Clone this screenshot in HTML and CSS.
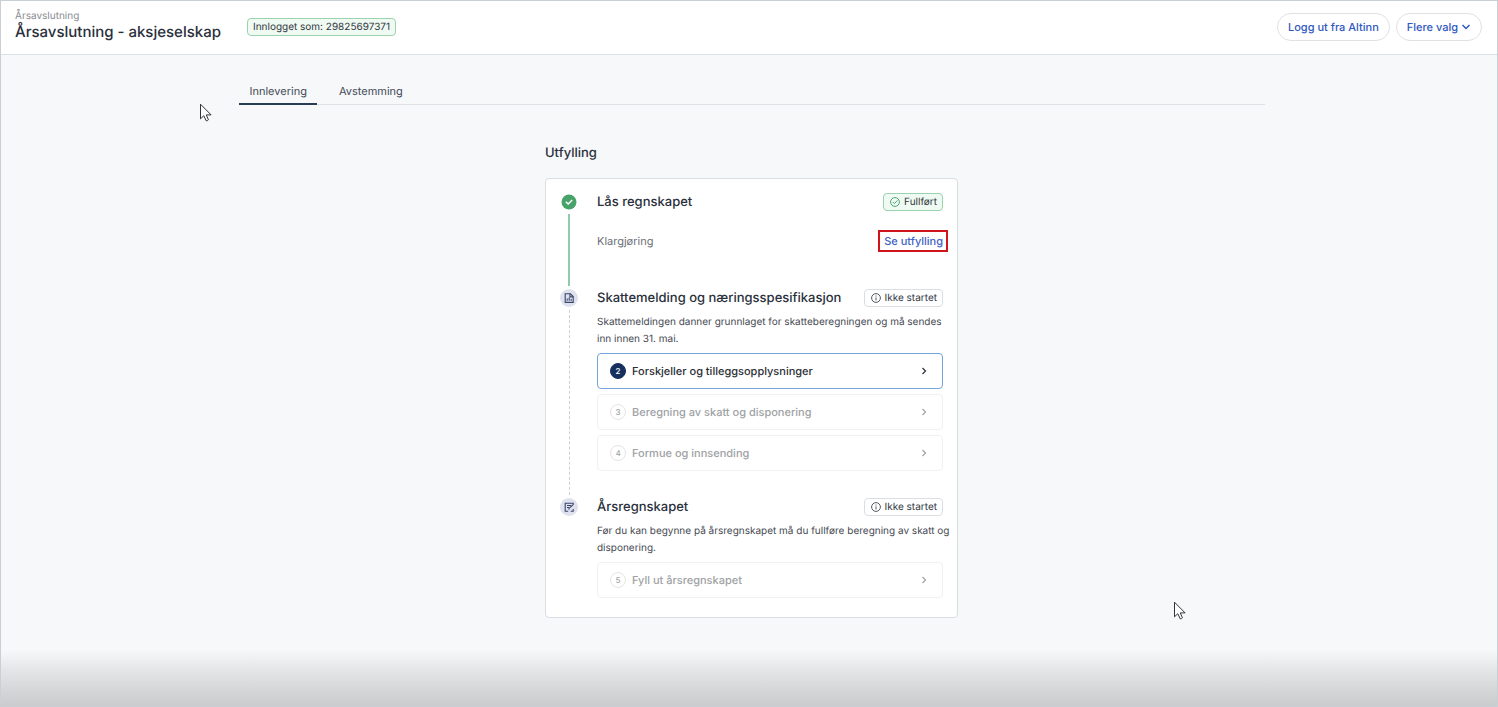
FILE: index.html
```html
<!DOCTYPE html>
<html lang="nb">
<head>
<meta charset="utf-8">
<meta name="viewport" content="width=device-width, initial-scale=1">
<title>Årsavslutning - aksjeselskap</title>
<link rel="stylesheet" href="styles.css">
</head>
<body>
<svg class="sprite" aria-hidden="true">
  <symbol id="chevron" viewBox="0 0 12 12"><path d="M4.500 3 7.500 6 4.500 9"/></symbol>
  <symbol id="info" viewBox="0 0 12 12"><circle cx="6" cy="6" r="4.4"/><path d="M6 5.4v3M6 3.5v1"/></symbol>
  <symbol id="pointer" viewBox="0 0 14 20"><path d="M1.5 1.2v14.6l3.3-3.1 2.4 5.1q1.200.3 2.200-1L7.300 11.900h4.800z"/></symbol>
</svg>
<header class="header">
  <div class="heading">
    <span class="overline">Årsavslutning</span>
    <h1 class="title">Årsavslutning - aksjeselskap</h1>
  </div>
  <span class="badge badge-success">Innlogget som: 29825697371</span>
  <div class="actions">
    <button class="pill" type="button">Logg ut fra Altinn</button>
    <button class="pill" type="button">Flere valg
      <svg class="caret" viewBox="0 0 10 8" aria-hidden="true"><path d="M1.5 2 5 5.500 8.500 2"/></svg>
    </button>
  </div>
</header>
<main class="main">
  <nav class="tabs">
    <a class="tab tab-active" href="#innlevering">Innlevering</a>
    <a class="tab" href="#avstemming">Avstemming</a>
  </nav>
  <section class="panel">
    <h2 class="panel-title">Utfylling</h2>
    <div class="card">
      <section class="step">
        <div class="rail">
          <svg class="marker" viewBox="0 0 18 18" aria-hidden="true"><circle cx="9" cy="9" r="7.500" fill="#48a36b"/><path d="M5.800 8.800 8.200 11l4-4" fill="none" stroke="#fff" stroke-width="1.500"/></svg>
          <span class="line line-done"></span>
        </div>
        <div class="content">
          <div class="step-head">
            <h3 class="step-title">Lås regnskapet</h3>
            <span class="badge badge-success"><svg class="badge-icon" viewBox="0 0 12 12" aria-hidden="true"><circle cx="6" cy="6" r="4.400"/><path d="m3.800 6 1.600 1.600 3-3.200"/></svg>Fullført</span>
          </div>
          <div class="summary">
            <span>Klargjøring</span>
            <a class="view-link" href="#utfylling">Se utfylling</a>
          </div>
        </div>
      </section>
      <section class="step">
        <div class="rail">
          <svg class="marker" viewBox="0 0 18 18" aria-hidden="true"><circle cx="9" cy="9" r="9" fill="#dfe2ec"/><g fill="none" stroke="#39446d" stroke-width="1.100"><path d="M5.200 4.800h5.200l2.800 2.800v5.800h-8z"/><path d="M10 4.800v3.100h3.200M7.200 11.800V9.500M9.200 11.800V8.500M11.200 11.800V10"/></g></svg>
          <span class="line"></span>
        </div>
        <div class="content">
          <div class="step-head">
            <h3 class="step-title">Skattemelding og næringsspesifikasjon</h3>
            <span class="badge"><svg class="badge-icon" aria-hidden="true"><use href="#info"/></svg>Ikke startet</span>
          </div>
          <p class="description">Skattemeldingen danner grunnlaget for skatteberegningen og må sendes inn innen 31. mai.</p>
          <div class="tasks">
            <button class="task task-active" type="button"><span class="number">2</span><span class="task-name">Forskjeller og tilleggsopplysninger</span><svg class="chevron" aria-hidden="true"><use href="#chevron"/></svg></button>
            <button class="task" type="button" disabled><span class="number">3</span><span class="task-name">Beregning av skatt og disponering</span><svg class="chevron" aria-hidden="true"><use href="#chevron"/></svg></button>
            <button class="task" type="button" disabled><span class="number">4</span><span class="task-name">Formue og innsending</span><svg class="chevron" aria-hidden="true"><use href="#chevron"/></svg></button>
          </div>
        </div>
      </section>
      <section class="step">
        <div class="rail">
          <svg class="marker" viewBox="0 0 18 18" aria-hidden="true"><circle cx="9" cy="9" r="9" fill="#dfe2ec"/><g fill="none" stroke="#39446d" stroke-width="1.100"><path d="M13.200 7V5.200h-8v8h3M13.200 11v2.200h-2.500"/><path d="M7 7.500h4M7 9.500h2M8.800 11.600l.4-1.400 3.600-3.200"/></g></svg>
        </div>
        <div class="content">
          <div class="step-head">
            <h3 class="step-title">Årsregnskapet</h3>
            <span class="badge"><svg class="badge-icon" aria-hidden="true"><use href="#info"/></svg>Ikke startet</span>
          </div>
          <p class="description">Før du kan begynne på årsregnskapet må du fullføre beregning av skatt og disponering.</p>
          <div class="tasks">
            <button class="task" type="button" disabled><span class="number">5</span><span class="task-name">Fyll ut årsregnskapet</span><svg class="chevron" aria-hidden="true"><use href="#chevron"/></svg></button>
          </div>
        </div>
      </section>
    </div>
  </section>
</main>
<div class="shade"></div>
<svg class="pointer pointer-left" aria-hidden="true"><use href="#pointer"/></svg>
<svg class="pointer pointer-right" aria-hidden="true"><use href="#pointer"/></svg>
</body>
</html>
```
FILE: styles.css
```css
*, *::before, *::after { box-sizing: border-box; }

body {
  margin: 0;
  min-height: 100vh;
  position: relative;
  border: 1px solid #c8d0d6;
  background: #f6f8fa;
  color: #2a303c;
  font: 11px/16px Inter, "Liberation Sans", sans-serif;
  text-rendering: geometricPrecision;
}

h1, h2, h3, p { margin: 0; }
button { font: inherit; text-rendering: inherit; }
a { text-decoration: none; }
svg { flex: none; }
.sprite { position: absolute; width: 0; height: 0; }

.header {
  display: flex;
  gap: 26px;
  padding: 9px 15px 13px 14px;
  background: #fff;
  border-bottom: 1px solid #dce1e6;
}
.heading { display: flex; flex-direction: column; }
.overline { font-size: 10px; line-height: 12px; color: #8a8c92; }
.title { font-size: 15px; line-height: 19px; font-weight: 500; }
.header .badge { margin-top: 8px; }

.actions { display: flex; gap: 6px; margin: 3px 0 0 auto; }
.pill {
  display: flex;
  align-items: center;
  gap: 3px;
  height: 28px;
  padding: 0 10px;
  border: 1px solid #dfe1e4;
  border-radius: 14px;
  background: #fff;
  color: #2f58c0;
  font-weight: 500;
}
.caret { width: 10px; height: 8px; fill: none; stroke: currentColor; stroke-width: 1.500; }

.badge {
  display: inline-flex;
  align-items: center;
  gap: 3px;
  height: 18px;
  padding: 0 5px;
  border: 1px solid #dadde1;
  border-radius: 4px;
  background: #fff;
  font-size: 10px;
  white-space: nowrap;
  color: #33373f;
}
.badge-success { border-color: #9bd3ae; background: #effaf2; }
.badge-icon { width: 12px; height: 12px; fill: none; stroke: #555960; }
.badge-success .badge-icon { stroke: #4fa572; }

.main {
  display: flex;
  flex-direction: column;
  align-items: center;
  padding: 23px 0 87px 5px;
}
.tabs {
  display: flex;
  gap: 11px;
  width: 100%;
  max-width: 1026px;
  border-bottom: 1px solid #dde2e7;
}
.tab { padding: 5px 10px 4px 11px; margin-bottom: -1px; border-bottom: 2px solid transparent; color: #454b59; }
.tab-active { border-color: #2a3d56; }

.panel { width: 100%; max-width: 413px; padding-top: 38px; }
.panel-title { font-size: 13px; line-height: 20px; font-weight: 500; margin-bottom: 15px; }
.card {
  padding: 14px 14px 19px;
  border: 1px solid #d9dee3;
  border-radius: 4px;
  background: #fff;
}

.step { display: flex; gap: 19px; }
.rail { display: flex; flex-direction: column; align-items: center; }
.marker { width: 18px; height: 18px; }
.line { flex: 1; margin: 3px 0; border-left: 1px dashed #cfcfcf; }
.line-done { border-left: 2px solid #8fcbab; }
.content { flex: 1; min-width: 0; padding-bottom: 27px; }
.step:first-child .content { padding-bottom: 37px; }
.step:last-child .content { padding-bottom: 0; }
.step-head { display: flex; align-items: center; justify-content: space-between; height: 18px; }
.step-title { font-size: 13px; line-height: 18px; font-weight: 500; }

.summary {
  display: flex;
  align-items: center;
  justify-content: space-between;
  margin: 19px -5px 0 0;
  color: #6c7077;
}
.view-link {
  padding: 1px 3px 1px 4px;
  border: 2px solid #d0141c;
  line-height: 16px;
  font-weight: 500;
  color: #3f62c4;
}

.description { margin-right: -8px; padding: 7px 0 5px; font-size: 10px; line-height: 17px; color: #464a52; }
.tasks { display: flex; flex-direction: column; gap: 5px; }
.task {
  display: flex;
  align-items: center;
  gap: 6px;
  width: 100%;
  height: 36px;
  padding: 0 12px;
  border: 1px solid #f0f1f2;
  border-radius: 4px;
  background: #fff;
  color: #a0a2a5;
  font-weight: 500;
  text-align: left;
}
.task-active { border-color: #71a5da; color: #2b2f36; }
.task-name { flex: 1; }
.number {
  display: grid;
  place-items: center;
  width: 16px;
  height: 16px;
  border: 1px solid #e3e4e6;
  border-radius: 50%;
  font-size: 8px;
  line-height: 12px;
}
.task-active .number { border-color: #15305f; background: #15305f; color: #fff; }
.chevron { width: 12px; height: 12px; fill: none; stroke: currentColor; stroke-width: 1.200; }

.shade {
  position: absolute;
  inset: auto 0 0;
  height: 56px;
  background: linear-gradient(#f6f8fa, #e2e3e4 40%, #c9cbcd);
}
.pointer { position: absolute; width: 14px; height: 20px; fill: #fff; stroke: #333; }
.pointer-left { left: 198px; top: 102px; }
.pointer-right { left: 1172px; top: 600px; }
```
